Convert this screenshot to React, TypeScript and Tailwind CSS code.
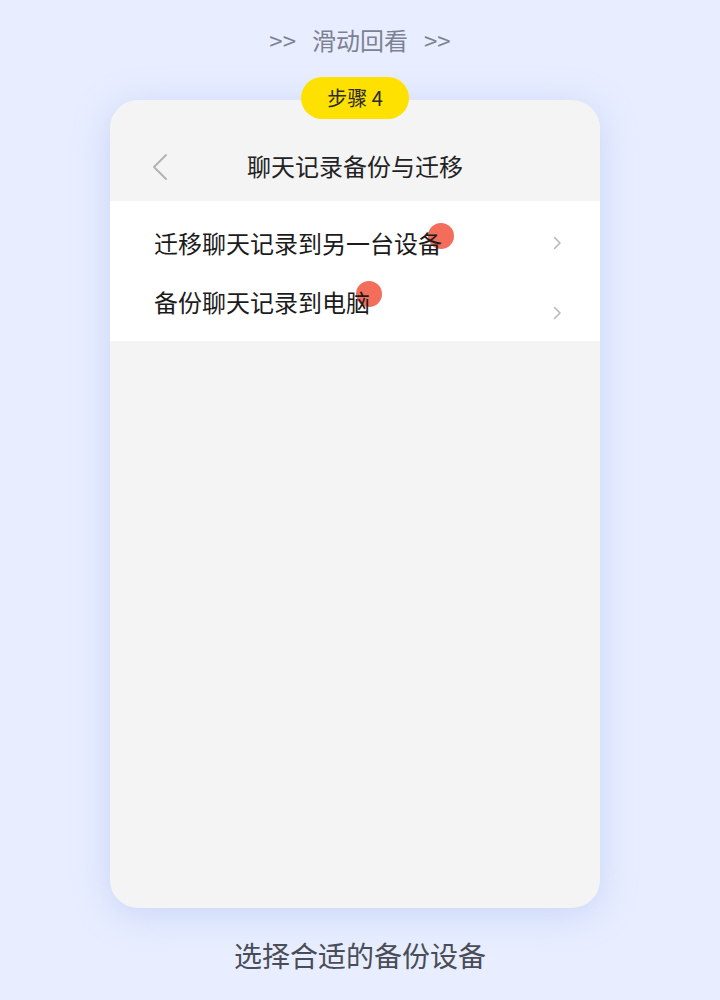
import React from "react";

const font = { fontFamily: '"Noto Sans CJK SC", "Noto Sans", sans-serif' };

function ChevronRight() {
  return (
    <svg width="9" height="14" viewBox="0 0 9 14" fill="none" className="shrink-0">
      <path d="M1.5 1.5L7 7L1.5 12.5" stroke="#b9b9b9" strokeWidth="1.6" strokeLinecap="round" strokeLinejoin="round" />
    </svg>
  );
}

function BackArrow() {
  return (
    <svg width="16" height="28" viewBox="0 0 16 28" fill="none">
      <path d="M14 2L2 14L14 26" stroke="#b3b3b3" strokeWidth="2" strokeLinecap="round" strokeLinejoin="round" />
    </svg>
  );
}

function Dot({ top }: { top: string }) {
  return (
    <span
      className={`absolute left-full -ml-[14px] h-[26px] w-[26px] rounded-full bg-[#f26d5a] ${top}`}
    />
  );
}

export default function App() {
  return (
    <div
      className="flex min-h-screen flex-col items-center bg-[#e8eeff]"
      style={font}
    >
      <div className="flex gap-[16px] pt-[24px] text-[24px] leading-[32px] text-[#7d8292]">
        <span>{">>"}</span>
        <span>滑动回看</span>
        <span>{">>"}</span>
      </div>

      <div className="relative -ml-[10px] mt-[44px] flex h-[808px] w-[490px] flex-col rounded-[28px] bg-[#f4f4f4] shadow-[0_6px_36px_rgba(140,165,235,0.35)]">
        {/* step badge */}
        <div className="absolute left-1/2 top-[-23px] flex h-[42px] w-[108px] -translate-x-1/2 items-center justify-center rounded-full bg-[#ffe100] text-[20px] text-[#2b2b2b]">
          步骤 4
        </div>

        {/* nav bar */}
        <div className="relative flex items-center justify-center pb-[19px] pt-[50px]">
          <div className="absolute left-[42px] top-[53px]">
            <BackArrow />
          </div>
          <div className="text-[24px] leading-[32px] text-[#222]">聊天记录备份与迁移</div>
        </div>

        {/* menu list */}
        <div className="bg-white pb-[21px] pl-[44px] pr-[38px] pt-[26px]">
          <div className="flex h-[32px] items-center justify-between">
            <span className="relative text-[24px] leading-[32px] text-[#1b1b1b]">
              <Dot top="top-[-4px]" />
              <span className="relative">迁移聊天记录到另一台设备</span>
            </span>
            <ChevronRight />
          </div>
          <div className="mt-[27px] flex items-start justify-between">
            <span className="relative text-[24px] leading-[32px] text-[#1b1b1b]">
              <Dot top="top-[-5px]" />
              <span className="relative">备份聊天记录到电脑</span>
            </span>
            <div className="mt-[20px]">
              <ChevronRight />
            </div>
          </div>
        </div>
      </div>

      <div className="mt-[27px] text-[28px] leading-[40px] text-[#4a4d57]">选择合适的备份设备</div>
    </div>
  );
}
